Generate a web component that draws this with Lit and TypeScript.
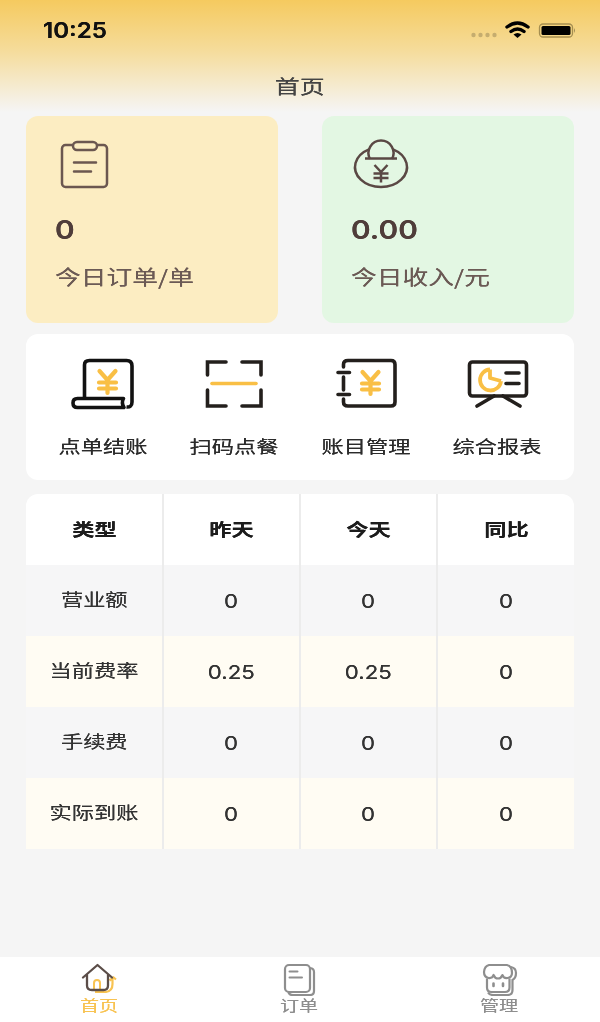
import { LitElement, html, css, svg } from "lit";
import { customElement } from "lit/decorators.js";

const yen = (x: number, y: number, c: string, w: number) => svg`
  <path d="M${x - 8} ${y + 1} L${x} ${y + 10} L${x + 8} ${y + 1} M${x - 8.5} ${y + 12.5} H${x + 8.5} M${x - 8.5} ${y + 18.5} H${x + 8.5} M${x} ${y + 10} V${y + 23}"
    fill="none" stroke="${c}" stroke-width="${w}" stroke-linecap="round" stroke-linejoin="round"/>`;

const rows = [
  ["营业额", "0", "0", "0"],
  ["当前费率", "0.25", "0.25", "0"],
  ["手续费", "0", "0", "0"],
  ["实际到账", "0", "0", "0"],
];

const actions = [
  {
    label: "点单结账",
    icon: svg`<svg class="act-icon" viewBox="69.5 355 66 56">
      ${yen(107, 370, "#f9bf45", 4.2)}
      <path d="M84 398 V365 Q84 360.5 89 360.5 H126 Q131.5 360.5 131.5 366 V402 Q131.5 407.5 126 407" fill="none" stroke="#111" stroke-width="3.6"/>
      <path d="M77 398.5 H123 Q120.5 403 123.5 407.5 H77 Q72.5 407.5 72.5 403 Q72.5 398.5 77 398.5 Z" fill="none" stroke="#111" stroke-width="3.6" stroke-linejoin="round"/>
    </svg>`,
  },
  {
    label: "扫码点餐",
    icon: svg`<svg class="act-icon" viewBox="201 355 66 56">
      <path d="M226 362 H207.5 V375 M242 362 H261 V375 M207.5 390 V406 H226 M261 390 V406 H242" fill="none" stroke="#231f1c" stroke-width="3.6" stroke-linecap="round"/>
      <path d="M212 383.5 H256" stroke="#f9bf45" stroke-width="3.6" stroke-linecap="round"/>
    </svg>`,
  },
  {
    label: "账目管理",
    icon: svg`<svg class="act-icon" viewBox="332.5 355 66 56">
      <path d="M343 367 V364.5 Q343 360.5 347.5 360.5 H390.5 Q394.5 360.5 394.5 364.5 V402 Q394.5 406 390.5 406 H347.5 Q343 406 343 402 V399 M343 377 V390" fill="none" stroke="#231f1c" stroke-width="3.6" stroke-linecap="round"/>
      <path d="M337.5 372.5 H349 M337.5 394.5 H349" stroke="#231f1c" stroke-width="3.6" stroke-linecap="round"/>
      ${yen(370, 371, "#f9bf45", 4.2)}
    </svg>`,
  },
  {
    label: "综合报表",
    icon: svg`<svg class="act-icon" viewBox="464 355 66 56">
      <rect x="469.5" y="362" width="57" height="34" rx="3" fill="none" stroke="#231f1c" stroke-width="3.6"/>
      <path d="M477 406 L494 396 M520 406 L503 396" stroke="#231f1c" stroke-width="3.6" stroke-linecap="round"/>
      <path d="M490 369.5 A10.5 10.5 0 1 0 501 381 M490 369.5 V378 L501 381" fill="none" stroke="#f9bf45" stroke-width="3.8" stroke-linejoin="round"/>
      <path d="M506 373 H519 M506 383.5 H519" stroke="#231f1c" stroke-width="3.6" stroke-linecap="round"/>
    </svg>`,
  },
];

const tabs = [
  {
    label: "首页",
    active: true,
    icon: svg`<svg class="tab-icon" viewBox="79 960 40 36">
      <path d="M95 992 H106 Q112.5 991 112.5 984 V977.5 M109.5 980.5 L113.5 977.5 L116 979.5" fill="none" stroke="#f8c352" stroke-width="2.2"/>
      <path d="M94 989.5 V983 Q94 980 97 980 Q100 980 100 983 V989.5" fill="none" stroke="#f8c352" stroke-width="2"/>
      <path d="M83 977.5 L97.5 965 L112 977.5 M87 975 V985.5 Q87 990 92 990 H103.5 Q108 990 108 985.5 V975" fill="none" stroke="#5b4d48" stroke-width="2.3" stroke-linecap="round" stroke-linejoin="round"/>
    </svg>`,
  },
  {
    label: "订单",
    active: false,
    icon: svg`<svg class="tab-icon" viewBox="280 960 40 36">
      <path d="M311 968 Q315 968.5 315 972 V991 Q315 995 311 995 H294 Q290 995 289.5 992" fill="none" stroke="#8e8e8e" stroke-width="2.2"/>
      <rect x="286" y="965" width="25" height="27" rx="4" fill="#fff" stroke="#8e8e8e" stroke-width="2.2"/>
      <path d="M290.5 971.5 H298.5 M290.5 977.5 H303" stroke="#8e8e8e" stroke-width="2" stroke-linecap="round"/>
    </svg>`,
  },
  {
    label: "管理",
    active: false,
    icon: svg`<svg class="tab-icon" viewBox="479 960 40 36">
      <path d="M511 967 Q516 968 516 973 Q516 978 512.5 980 V990 Q512.5 995 507.5 995 H493 Q489.5 995 488 992.5" fill="none" stroke="#8e8e8e" stroke-width="2.2"/>
      <path d="M487 978.5 V987.5 Q487 992 491.5 992 H505 Q509.5 992 509.5 987.5 V978.5" fill="#fff" stroke="#8e8e8e" stroke-width="2.2"/>
      <path d="M489 965 H507 Q512 966 512 973 Q512 977.5 507.5 978 Q503.5 978.5 502.5 975 Q501 978.5 498 978.5 Q495 978.5 493.5 975 Q492.5 978.5 488.5 978 Q484 977 484 972 Q484.5 966 489 965 Z" fill="#fff" stroke="#8e8e8e" stroke-width="2.2" stroke-linejoin="round"/>
      <path d="M493.5 983.5 V986 M503 983.5 V986" stroke="#8e8e8e" stroke-width="2.6" stroke-linecap="round"/>
    </svg>`,
  },
];

@customElement("app-root")
export class AppRoot extends LitElement {
  static styles = css`
    :host {
      display: flex;
      flex-direction: column;
      width: 600px;
      height: 1022px;
      overflow: hidden;
      background: #f5f5f5;
      font-family: "Liberation Sans", "Noto Sans CJK SC", sans-serif;
      color: #333;
      text-shadow: 0 0 0.4px currentColor;
    }
    svg { display: block; flex: none; filter: blur(0.4px); }
    .wide { display: inline-block; transform: scaleX(1.27); white-space: nowrap; }
    .wide-left { transform-origin: left center; }
    .time .wide, .value .wide, .num .wide { transform: scaleX(1.16); }

    .header {
      height: 112px;
      flex: none;
      display: flex;
      flex-direction: column;
      background: linear-gradient(180deg, #f5ca5f 0%, #f5dc9b 45%, #f5f5f5 100%);
    }
    .status {
      height: 24px;
      margin-top: 18px;
      padding: 0 22px 0 43px;
      display: flex;
      justify-content: space-between;
      align-items: center;
    }
    .time { padding-top: 1px; font-family: Inter, sans-serif; font-size: 20.8px; font-weight: 600; line-height: 24px; color: #111; }
    .status-icons { width: 110px; height: 24px; }
    .title { margin-top: 30px; font-size: 19.7px; line-height: 30px; text-align: center; color: #444; }

    .main { flex: none; padding: 4px 26px 0; display: flex; flex-direction: column; }
    .stats { display: flex; justify-content: space-between; }
    .stat {
      width: 252px;
      height: 207px;
      box-sizing: border-box;
      border-radius: 12px;
      padding: 20px 0 0 29px;
      color: #5f4d48;
    }
    .stat.yellow { background: #fcedc2; }
    .stat.green { background: #e3f7e3; }
    .stat-icon { width: 60px; height: 56px; }
    .value { margin-top: 23px; font-family: Inter, sans-serif; font-size: 25.7px; font-weight: 600; line-height: 30px; color: #4f3d3a; }
    .stat-label { margin-top: 16px; font-family: "Noto Sans CJK SC", sans-serif; font-size: 20.3px; line-height: 30px; color: #6b5a55; }

    .actions {
      margin-top: 11px;
      height: 146px;
      box-sizing: border-box;
      padding: 21px 11.25px 0 10.75px;
      background: #fff;
      border-radius: 12px;
      display: grid;
      grid-template-columns: repeat(4, 1fr);
    }
    .action { display: flex; flex-direction: column; align-items: center; }
    .act-icon { width: 66px; height: 56px; }
    .act-label { margin-top: 24px; font-size: 17.5px; line-height: 24px; color: #2b2b2b; }

    .table {
      margin-top: 14px;
      border-radius: 12px 12px 0 0;
      overflow: hidden;
      display: grid;
      grid-template-columns: repeat(4, 1fr);
      grid-auto-rows: 71px;
    }
    .cell {
      display: flex;
      align-items: center;
      justify-content: center;
      box-sizing: border-box;
      padding-bottom: 4px;
      font-size: 17.5px;
      color: #333;
      border-left: 1px solid #ececec;
      border-right: 1px solid #ececec;
    }
    .cell:nth-child(4n) { border-right: none; }
    .cell:nth-child(4n + 1) { border-left: none; }
    .head { padding-bottom: 2px; background: #fff; font-weight: 700; color: #1c1c1c; }
    .odd { background: #f6f6f7; }
    .even { background: #fffcf3; }
    .num { padding-bottom: 0; font-family: Inter, sans-serif; font-size: 19.2px; font-weight: 400; }

    .tabbar {
      margin-top: auto;
      height: 65px;
      flex: none;
      box-sizing: border-box;
      padding: 3px 81px 0 79px;
      background: #fff;
      display: flex;
      justify-content: space-between;
    }
    .tab { width: 40px; display: flex; flex-direction: column; align-items: center; color: #8e8e8e; }
    .tab.active { color: #f8c352; }
    .tab-icon { width: 40px; height: 36px; }
    .tab-label { margin-top: 1px; font-size: 15px; line-height: 18px; }
  `;

  private isNum(v: string) {
    return /^[0-9.]+$/.test(v);
  }

  render() {
    return html`
      <div class="header">
        <div class="status">
          <span class="time"><span class="wide wide-left">10:25</span></span>
          <svg class="status-icons" viewBox="468 18 110 24">
            <g fill="#9c8a5a" fill-opacity=".55">
              <circle cx="473.5" cy="35" r="2.2"/><circle cx="480.5" cy="35" r="2.2"/><circle cx="487.5" cy="35" r="2.2"/><circle cx="494.5" cy="35" r="2.2"/>
            </g>
            <path d="M507 27 Q517.5 19 528 27 M511 31.5 Q517.5 26.5 524 31.5" fill="none" stroke="#000" stroke-width="3.4" stroke-linecap="round"/>
            <path d="M513.5 34.5 Q517.5 31.5 521.5 34.5 L517.5 38 Z" fill="#000"/>
            <rect x="539.5" y="24" width="33" height="13" rx="3.5" fill="none" stroke="#a58e50" stroke-width="1.3"/>
            <rect x="541.5" y="26" width="29" height="9" rx="1.5" fill="#000"/>
            <path d="M574 28 Q575.5 30.5 574 33 Z" fill="#8a7748"/>
          </svg>
        </div>
        <div class="title"><span class="wide">首页</span></div>
      </div>
      <div class="main">
        <div class="stats">
          <div class="stat yellow">
            <svg class="stat-icon" viewBox="55 136 60 56">
              <rect x="62" y="145" width="45" height="42" rx="3.5" fill="none" stroke="#6b5750" stroke-width="2.5"/>
              <rect x="73" y="142" width="24" height="8" rx="4" fill="#fcedc2" stroke="#6b5750" stroke-width="2.5"/>
              <path d="M74 162.5 H96 M74 171.5 H91" stroke="#6b5750" stroke-width="2.5" stroke-linecap="round"/>
            </svg>
            <div class="value"><span class="wide wide-left">0</span></div>
            <div class="stat-label"><span class="wide wide-left">今日订单/单</span></div>
          </div>
          <div class="stat green">
            <svg class="stat-icon" viewBox="351 136 60 56">
              <path d="M369 149.3 A26 20 0 1 0 393 149.3" fill="none" stroke="#5a4844" stroke-width="2.5"/>
              <path d="M370 159 A12.5 12.5 0 1 1 392 159" fill="none" stroke="#5a4844" stroke-width="2.5"/>
              <path d="M365 158.5 H397" stroke="#5a4844" stroke-width="2.5"/>
              <path d="M374.5 165 L381 172 L387.5 165 M373.5 173.5 H388.5 M373.5 178 H388.5 M381 172 V182.5" fill="none" stroke="#5a4844" stroke-width="2.5"/>
            </svg>
            <div class="value"><span class="wide wide-left">0.00</span></div>
            <div class="stat-label"><span class="wide wide-left">今日收入/元</span></div>
          </div>
        </div>

        <div class="actions">
          ${actions.map(
            (a) => html`<div class="action">${a.icon}<div class="act-label"><span class="wide">${a.label}</span></div></div>`
          )}
        </div>

        <div class="table">
          ${["类型", "昨天", "今天", "同比"].map((h) => html`<div class="cell head"><span class="wide">${h}</span></div>`)}
          ${rows.map((r, i) =>
            r.map(
              (v) => html`<div class="cell ${i % 2 === 0 ? "odd" : "even"} ${this.isNum(v) ? "num" : ""}"><span class="wide">${v}</span></div>`
            )
          )}
        </div>
      </div>
      <div class="tabbar">
        ${tabs.map(
          (t) => html`<div class="tab ${t.active ? "active" : ""}">${t.icon}<div class="tab-label"><span class="wide">${t.label}</span></div></div>`
        )}
      </div>
    `;
  }
}
